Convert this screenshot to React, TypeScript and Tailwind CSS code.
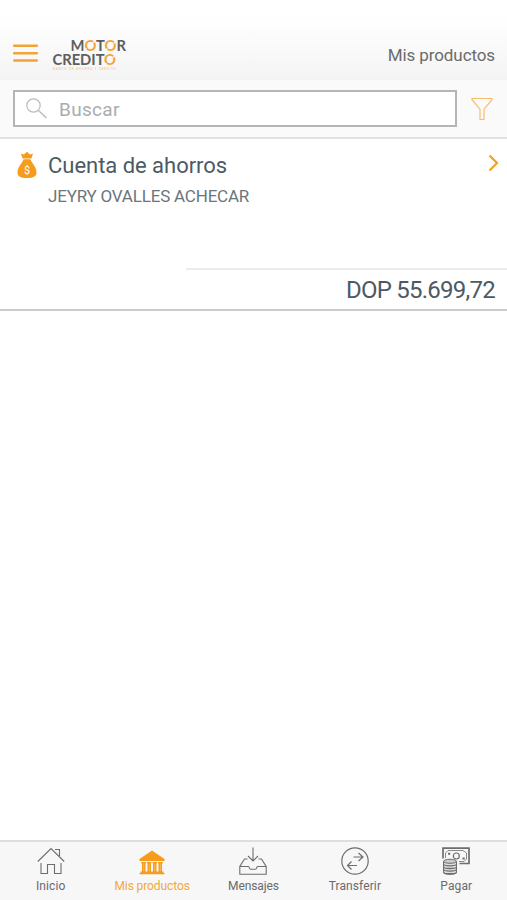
import type { ReactNode } from "react";

function MenuIcon() {
  return (
    <svg width="25" height="18" viewBox="0 0 25 18" className="block" stroke="#f3a338" strokeWidth="2.500" strokeLinecap="round">
      <path d="M1.200 1.700h22.600M1.200 9.200h22.600M1.200 16.600h22.600" />
    </svg>
  );
}

function Logo() {
  return (
    <svg width="78" height="42" viewBox="0 0 78 42" className="block" fontFamily="Lato, sans-serif" fontWeight="700" fontSize="14.500" fill="#5d5e60">
      <text x="18.500" y="19" textLength="55.500" lengthAdjust="spacingAndGlyphs">
        M<tspan fill="#f3a63a">O</tspan>T<tspan fill="#f3a63a">O</tspan>R
      </text>
      <text x=".5" y="33.300" textLength="63.500" lengthAdjust="spacingAndGlyphs">
        CREDIT<tspan fill="#f3a63a">O</tspan>
      </text>
      <path d="M40 11.500l3.500-3M32 18.500l2.500-2M61.500 11.500l3.500-3M53 18.500l2.500-2M60 26l3.500-3M52 33l2.500-2" stroke="#f8f8f8" strokeWidth="1.200" />
      <text x="1" y="37.500" fontSize="3" fontWeight="400" fill="#f4bd6c" textLength="63">BANCO DE AHORRO Y CREDITO</text>
    </svg>
  );
}

function MoneyBag() {
  return (
    <svg width="20" height="28" viewBox="0 0 20 28" className="block">
      <path d="M5.500 7.500L4 2.500l3 1L10 .8l3 2.700 3-1-1.500 5z" fill="#f59c1a" />
      <path d="M6.500 8.300h7c.5 3.200 6 7.200 6 13.200 0 4-3 5.500-9.500 5.500S.5 25.500.5 21.500c0-6 5.500-10 6-13.200z" fill="#f59c1a" />
      <text x="10" y="22.800" fontSize="11" textAnchor="middle" fontFamily="Roboto, sans-serif" fill="#fff">$</text>
    </svg>
  );
}

const HomeIcon = () => (
  <svg width="28" height="28" viewBox="0 0 28 28" fill="none" stroke="#6e6e6e" strokeWidth="1.1">
    <path d="M.8 14.500L14 1.500l13.200 13M18 2.500h4.500v6.500M4 16v10.500h6.500v-9h7v9H24V16" />
  </svg>
);
const BankIcon = () => (
  <svg width="28" height="28" viewBox="0 0 28 28" fill="#f59c1a">
    <path d="M14 3.500L26.500 12v2h-25v-2zM3 15h5v1.200H3zM9 15h4.500v1.200H9zM14.500 15H19v1.200h-4.500zM20 15h5v1.200h-5zM4 16h3.500v9H4zM9.500 16H13v9H9.500zM15 16h3.500v9H15zM20.500 16H24v9h-3.500zM2.500 24.500h23V26h-23zM1.500 26h25v1.300h-25z" />
    <path d="M5.800 16.500v7.500M11.300 16.500v7.500M16.800 16.500v7.500M22.300 16.500v7.500" stroke="#fbcf8c" strokeWidth=".6" />
  </svg>
);
const InboxIcon = () => (
  <svg width="28" height="28" viewBox="0 0 28 28" fill="none" stroke="#6e6e6e" strokeWidth="1.100">
    <path d="M14 .5v13M9 9l5 5 5-5M8.500 12H5.500L.8 19.500v7.800h26.400v-7.800L22.500 12h-3M.8 19.500h8.700c1 0 .5 2.800 2 2.800h5c1.500 0 1-2.800 2-2.800h8.700" />
  </svg>
);
const TransferIcon = () => (
  <svg width="28" height="28" viewBox="0 0 28 28" fill="none" stroke="#6e6e6e" strokeWidth="1.200">
    <circle cx="14" cy="14" r="13.200" />
    <path d="M12.500 10H22M17.500 6l4.500 4-4.500 4M16 18.500H6.500M10.500 14.500l-4 4 4 4" />
  </svg>
);
const PayIcon = () => (
  <svg width="28" height="28" viewBox="0 0 28 28" fill="none" stroke="#6e6e6e">
    <path d="M1 11.500V1.200h26v15.300h-9.500" strokeWidth="1.700" />
    <path d="M3.500 11V6L6 3.500h15L24.500 6v6L22 14.500h-5" strokeWidth=".8" />
    <circle cx="14.300" cy="9" r="3" strokeWidth="1.200" />
    <path d="M6 6.800h2.200M20.500 11.500h2.200" strokeWidth="2" />
    <path d="M1.500 14.500v11c0 2.500 13 2.500 13 0v-11" fill="#ddd" />
    <ellipse cx="8" cy="14.300" rx="6.500" ry="2" fill="#ccc" />
    <path d="M1.500 17.300c0 2 13 2 13 0M1.500 20c0 2 13 2 13 0M1.500 22.600c0 2 13 2 13 0M1.500 25.200c0 2 13 2 13 0" strokeWidth="1.300" />
  </svg>
);

const tabs: { label: string; icon: ReactNode; style: string }[] = [
  { label: "Inicio", icon: <HomeIcon />, style: "text-[#6a6a6a] tracking-[0.1px]" },
  { label: "Mis productos", icon: <BankIcon />, style: "text-[#f3a73c] tracking-[-0.1px]" },
  { label: "Mensajes", icon: <InboxIcon />, style: "text-[#6a6a6a] tracking-[-0.1px]" },
  { label: "Transferir", icon: <TransferIcon />, style: "text-[#6a6a6a] tracking-[0.1px]" },
  { label: "Pagar", icon: <PayIcon />, style: "text-[#6a6a6a] tracking-[0.1px]" },
];

export default function App() {
  return (
    <div className="flex h-[900px] w-[507px] flex-col overflow-hidden bg-white font-[Roboto,sans-serif]">
      <header className="flex h-20 shrink-0 items-end bg-linear-to-b from-white from-20% to-[#f4f4f4] pr-3 pl-[13px]">
        <div className="mb-[18px]">
          <MenuIcon />
        </div>
        <div className="mb-[6px] ml-[14px]">
          <Logo />
        </div>
        <h1 className="mb-[13px] ml-auto text-[17px] leading-6 tracking-[-0.1px] text-[#6b6b6b]">Mis productos</h1>
      </header>

      <div className="flex h-[59px] shrink-0 items-center border-b-2 border-[#e2e2e2] bg-[#fafafa] pl-[13px]">
        <div className="flex h-[37px] w-[444px] items-center border-2 border-[#b3b5b6] bg-white pb-px pl-[11px]">
          <svg width="21" height="21" viewBox="0 0 21 21" fill="none" stroke="#b9bbbc" strokeWidth="1.200">
            <circle cx="7.500" cy="7.500" r="6.700" />
            <path d="M12.500 12.500l8 7.500" strokeWidth="1.500" />
          </svg>
          <span className="ml-3 pt-[3px] text-[19px] leading-6 tracking-[0.3px] text-[#a9adaf]">Buscar</span>
        </div>
        <svg width="22" height="24" viewBox="0 0 22 24" className="ml-[14px]" fill="none" stroke="#f7bd6c" strokeWidth="1.200">
          <path d="M1 1.500h20v1.200l-8 9.500V22.500H9V12.200l-8-9.500z" />
        </svg>
      </div>

      <section className="flex h-[172px] shrink-0 flex-col border-b-2 border-[#c9cbcc]">
        <div className="flex h-[129px] pt-3">
          <div className="ml-[17px] w-[31px]">
            <MoneyBag />
          </div>
          <div>
            <h2 className="pt-[3px] text-[22px] leading-6 tracking-[-0.03px] text-[#4c5a65]">Cuenta de ahorros</h2>
            <p className="mt-[6px] text-[17px] leading-6 tracking-[-0.2px] text-[#6b757c]">JEYRY OVALLES ACHECAR</p>
          </div>
          <svg width="11" height="18" viewBox="0 0 11 18" className="mt-[3px] mr-[8px] ml-auto" fill="none" stroke="#f3a026" strokeWidth="2.200">
            <path d="M1.500 1.500L9 9l-7.500 7.500" />
          </svg>
        </div>
        <div className="ml-auto flex h-[41px] w-[321px] items-center justify-end border-t-2 border-[#ececec] pr-[12px] text-[24px] leading-7 tracking-[-0.75px] text-[#4c5a65]">
          DOP 55.699,72
        </div>
      </section>

      <main className="flex-1" />

      <nav className="grid h-[60px] shrink-0 grid-cols-5 border-t-2 border-[#dedede] bg-[#f7f7f7]">
        {tabs.map((tab) => (
          <div key={tab.label} className="flex flex-col items-center pt-[5px]">
            {tab.icon}
            <span className={`mt-[3px] text-[12px] leading-4 whitespace-nowrap ${tab.style}`}>{tab.label}</span>
          </div>
        ))}
      </nav>
    </div>
  );
}
